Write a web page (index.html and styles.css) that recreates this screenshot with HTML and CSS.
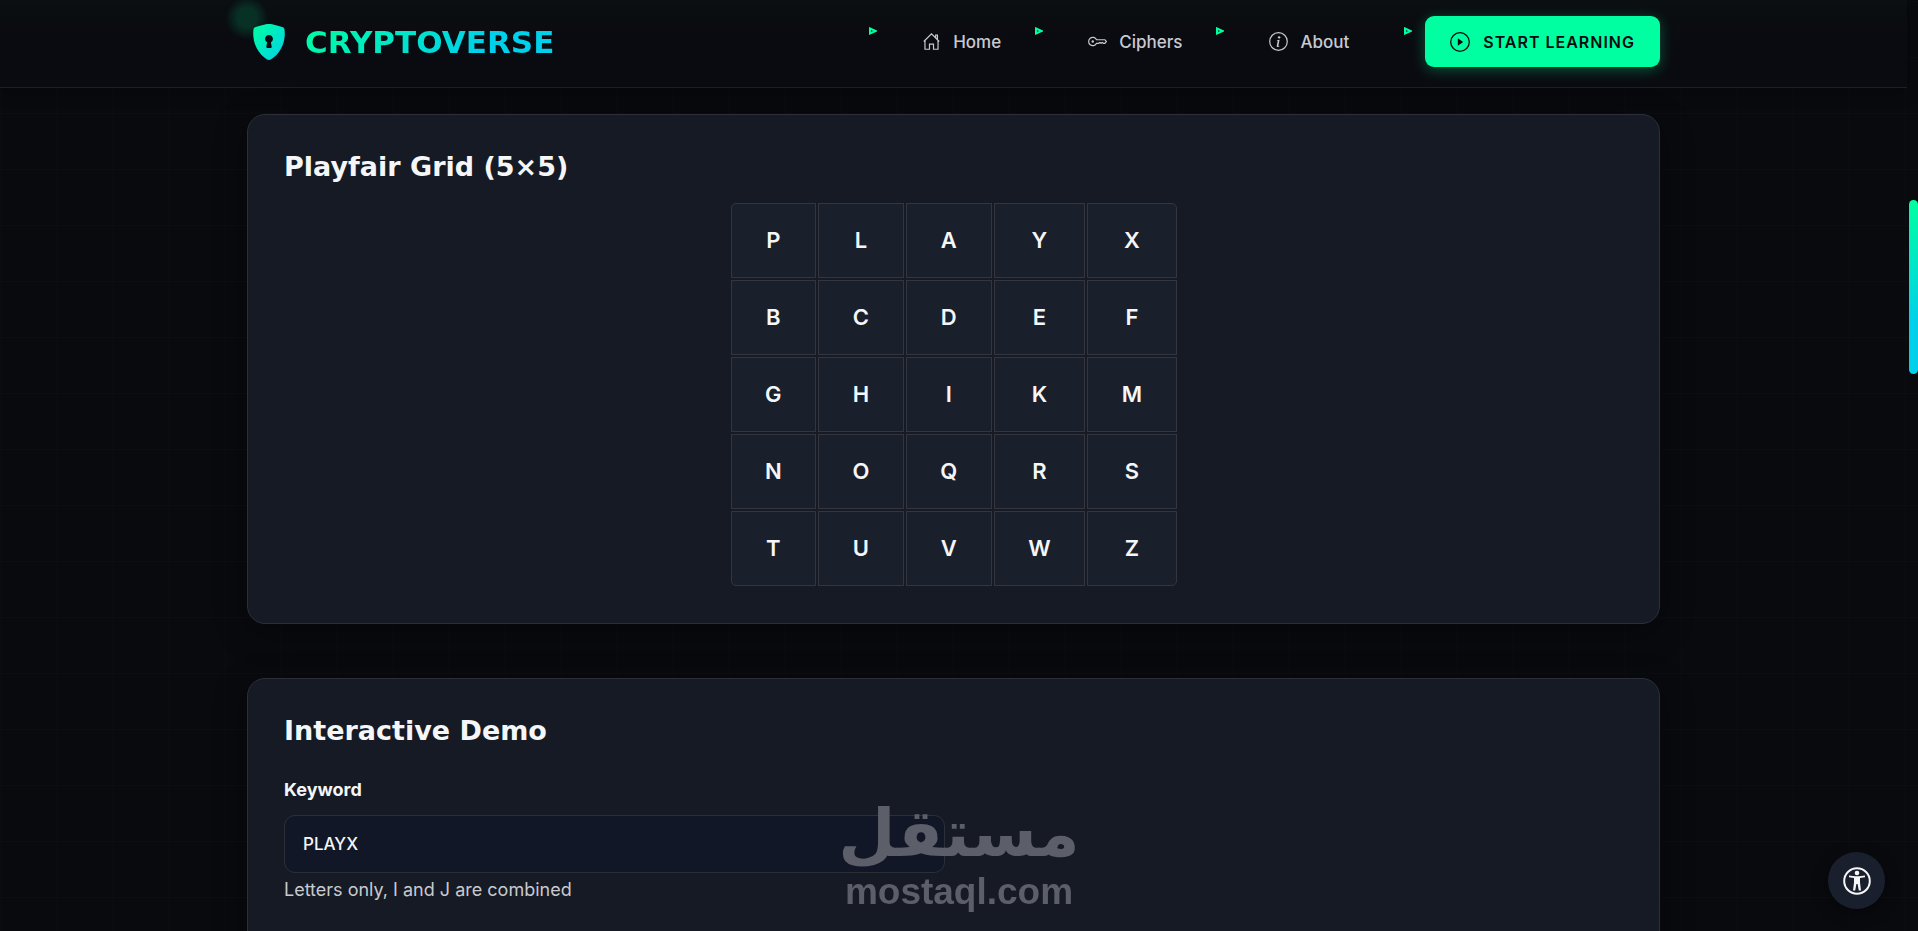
FILE: index.html
```html
<!DOCTYPE html>
<html lang="en">
<head>
    <meta charset="UTF-8">
    <meta name="viewport" content="width=device-width, initial-scale=1.0">
    <title>Playfair Cipher - CryptoVerse</title>
    <link rel="stylesheet" href="styles.css">
</head>
<body>
    <header class="header">
        <div class="container header-inner">
            <a href="#" class="logo">
                <svg class="logo-icon" viewBox="0 0 32 36" aria-hidden="true">
                    <defs>
                        <linearGradient id="shield" x1="0" y1="0" x2="1" y2="1">
                            <stop offset="0" stop-color="#00ffa0"/>
                            <stop offset="1" stop-color="#00d0ea"/>
                        </linearGradient>
                    </defs>
                    <path fill="url(#shield)" fill-rule="evenodd" d="M16 0C12.500 0 5.500 2 2.200 3.200C1.200 3.600 .6 4.300 .5 5.300C-.8 16 2.800 24 7.500 29.800C10.200 33 14 36 16 36C18 36 21.800 33 24.500 29.800C29.200 24 32.800 16 31.500 5.300C31.400 4.300 30.800 3.600 29.800 3.200C26.500 2 19.500 0 16 0ZM16 11A3.900 3.900 0 0 1 17.900 18.300L18.700 22.600Q18.800 24 17.600 24H14.400Q13.200 24 13.300 22.600L14.100 18.300A3.900 3.900 0 0 1 16 11Z"/>
                </svg>
                <span class="logo-text">CRYPTOVERSE</span>
            </a>
            <nav>
                <ul class="nav-list">
                    <li>
                        <svg class="marker" viewBox="0 0 8 8" aria-hidden="true"><path d="M1 1.500L6.500 4L1 6.500Z"/></svg>
                        <a href="#" class="nav-link">
                            <svg class="nav-icon" viewBox="0 0 16 16" aria-hidden="true"><path d="M2.500 7.400V14.500H6.300V10.200H9.700V14.500H13.500V7.400M1.500 8L8 1.500L14.500 8M11.500 4.800V2.500H13V6.300"/></svg>
                            Home
                        </a>
                    </li>
                    <li>
                        <svg class="marker" viewBox="0 0 8 8" aria-hidden="true"><path d="M1 1.500L6.500 4L1 6.500Z"/></svg>
                        <a href="#" class="nav-link">
                            <svg class="nav-icon" viewBox="0 0 16 16" aria-hidden="true"><path d="M7.200 6.500A3.500 3.500 0 1 0 7.200 9.500H9L10 8.800L11 9.500L12 8.800L13 9.500H14.200L15.500 8L14.200 6.500Z"/><circle class="solid" cx="4" cy="8" r="1"/></svg>
                            Ciphers
                        </a>
                    </li>
                    <li>
                        <svg class="marker" viewBox="0 0 8 8" aria-hidden="true"><path d="M1 1.500L6.500 4L1 6.500Z"/></svg>
                        <a href="#" class="nav-link">
                            <svg class="nav-icon" viewBox="0 0 16 16" aria-hidden="true"><circle cx="8" cy="8" r="7.400"/><path class="solid" d="M8.930 6.588L6.640 6.875L6.560 7.255L7.010 7.338C7.300 7.408 7.360 7.513 7.295 7.808L6.557 11.276C6.363 12.173 6.662 12.595 7.365 12.595C7.910 12.595 8.543 12.343 8.830 11.997L8.918 11.581C8.718 11.757 8.426 11.827 8.232 11.827C7.957 11.827 7.857 11.634 7.928 11.294Z"/><circle class="solid" cx="8.500" cy="4.500" r="1"/></svg>
                            About
                        </a>
                    </li>
                    <li class="nav-cta">
                        <svg class="marker" viewBox="0 0 8 8" aria-hidden="true"><path d="M1 1.500L6.500 4L1 6.500Z"/></svg>
                        <button type="button" class="btn-start">
                            <svg class="btn-icon" viewBox="0 0 20 20" aria-hidden="true"><circle cx="10" cy="10" r="9.300" fill="none" stroke="currentColor" stroke-width="1.300"/><path fill="currentColor" d="M7.800 6.200L13.200 10L7.800 13.800Z"/></svg>
                            START LEARNING
                        </button>
                    </li>
                </ul>
            </nav>
        </div>
    </header>

    <main class="container main">
        <section class="card">
            <h2>Playfair Grid (5×5)</h2>
            <table class="playfair-grid">
                <tbody>
                    <tr><td>P</td><td>L</td><td>A</td><td>Y</td><td>X</td></tr>
                    <tr><td>B</td><td>C</td><td>D</td><td>E</td><td>F</td></tr>
                    <tr><td>G</td><td>H</td><td>I</td><td>K</td><td>M</td></tr>
                    <tr><td>N</td><td>O</td><td>Q</td><td>R</td><td>S</td></tr>
                    <tr><td>T</td><td>U</td><td>V</td><td>W</td><td>Z</td></tr>
                </tbody>
            </table>
        </section>

        <section class="card card-demo">
            <h2>Interactive Demo</h2>
            <div class="form-group">
                <label for="keyword">Keyword</label>
                <input type="text" id="keyword" value="PLAYX">
                <small>Letters only, I and J are combined</small>
            </div>
        </section>
    </main>

    <div class="cursor-glow"></div>

    <div class="watermark">
        <span class="watermark-ar" lang="ar" dir="rtl">مستقل</span>
        <span class="watermark-en">mostaql.com</span>
    </div>

    <button type="button" class="accessibility-btn" aria-label="Accessibility">
        <svg viewBox="0 0 28 28" aria-hidden="true">
            <circle cx="14" cy="14" r="12.800" fill="none" stroke="currentColor" stroke-width="2"/>
            <circle cx="14" cy="6" r="2.300" fill="currentColor"/>
            <path fill="currentColor" d="M6 8.600L12 9.200H16L22 8.600V10.200L17 11V15.500L18 23.500H15.800L14.600 17H13.400L12.200 23.500H10L11 15.500V11L6 10.200Z"/>
        </svg>
    </button>

    <div class="scroll-thumb"></div>
</body>
</html>
```

FILE: styles.css
```css
* {
    box-sizing: border-box;
}
body {
    margin: 0;
    padding-right: 11px;
    height: 100vh;
    overflow: hidden;
    display: flex;
    flex-direction: column;
    font-family: Inter, "Liberation Sans", sans-serif;
    font-size: 18px;
    line-height: 26px;
    color: #f5f6f8;
    background-color: #090a0e;
    /* faint grid behind the page */
    background-image:
        linear-gradient(rgba(0, 255, 160, 0.02) 1px, transparent 1px),
        linear-gradient(90deg, rgba(0, 255, 160, 0.02) 1px, transparent 1px);
    background-size: 56px 56px;
    background-position: 1px 1px;
}
.container {
    width: 100%;
    max-width: 1461px;
    margin: 0 auto;
    padding: 0 24px;
}

/* Header */
.header {
    flex: none;
    background: linear-gradient(#0a0f11, #0a0b10 40px);
    border-bottom: 1px solid #1c1e29;
    box-shadow: 0 4px 16px rgba(0, 0, 0, 0.3);
}
.header-inner {
    display: flex;
    align-items: center;
    justify-content: space-between;
    padding-top: 16px;
    padding-bottom: 20px;
}
.logo {
    display: flex;
    align-items: center;
    gap: 20px;
    padding-left: 6px;
    text-decoration: none;
}
.logo-icon {
    width: 32px;
    height: 36px;
}
.logo-text {
    font-family: "DejaVu Sans", sans-serif;
    font-size: 31px;
    font-weight: bold;
    line-height: 36px;
    color: transparent;
    background: linear-gradient(135deg, #00ffa0, #00d0ea 70%);
    -webkit-background-clip: text;
    background-clip: text;
}
.nav-list {
    display: flex;
    align-items: center;
    gap: 23px;
    margin: 0;
    padding: 0;
    list-style: none;
}
.nav-list li {
    position: relative;
    padding: 0 32px;
}
.nav-list .nav-cta {
    margin-left: 21px;
    padding: 0;
}
.marker {
    position: absolute;
    left: -21px;
    top: -2px;
    width: 8px;
    height: 8px;
    fill: none;
    stroke: #00ffa0;
    stroke-width: 2;
}
.nav-cta .marker {
    top: 11px;
}
.nav-link {
    display: flex;
    align-items: center;
    gap: 12px;
    font-size: 17px;
    font-weight: 500;
    color: #c8cad0;
    text-decoration: none;
}
.nav-icon {
    width: 19px;
    height: 19px;
    fill: none;
    stroke: currentColor;
    stroke-width: 1;
}
.nav-icon .solid {
    fill: currentColor;
    stroke: none;
}
.btn-start {
    display: flex;
    align-items: center;
    gap: 13px;
    height: 51px;
    padding: 0 25px;
    border: none;
    border-radius: 9px;
    background: #00ffa0;
    color: #0a0b10;
    font: 600 16px/26px Inter, sans-serif;
    letter-spacing: 1px;
    box-shadow: 0 3px 14px rgba(0, 255, 160, 0.3);
    cursor: pointer;
}
.btn-icon {
    width: 20px;
    height: 20px;
}

/* Cards */
.main {
    flex: 1;
    min-height: 0;
    padding-top: 26px;
    display: flex;
    flex-direction: column;
    gap: 54px;
}
.card {
    flex: none;
    padding: 36px 36px 35px;
    border: 1px solid #2b2f38;
    border-radius: 18px;
    background: #161a24;
    box-shadow: 0 8px 32px rgba(0, 0, 0, 0.4);
}
.card-demo {
    min-height: 480px;
}
h2 {
    margin: 0 0 18px;
    font-family: "DejaVu Sans", sans-serif;
    font-size: 27px;
    font-weight: bold;
    line-height: 32px;
}
.playfair-grid {
    width: 450px;
    margin: 0 auto;
    border-collapse: separate;
    border-spacing: 2px;
}
.playfair-grid td {
    height: 75px;
    padding: 0 32px 2px;
    border: 1px solid #33363f;
    background: #1a1f2c;
    font-size: 22px;
    font-weight: 600;
    text-align: center;
}
.playfair-grid tr:first-child td:first-child {
    border-top-left-radius: 5px;
}
.playfair-grid tr:first-child td:last-child {
    border-top-right-radius: 5px;
}
.playfair-grid tr:last-child td:first-child {
    border-bottom-left-radius: 5px;
}
.playfair-grid tr:last-child td:last-child {
    border-bottom-right-radius: 5px;
}

/* Demo form */
.form-group {
    display: flex;
    flex-direction: column;
    margin-top: 30px;
    width: 661px;
    max-width: 100%;
}
.form-group label {
    margin-bottom: 12px;
    font-weight: 700;
}
.form-group input {
    height: 58px;
    margin-bottom: 4px;
    padding: 0 18px;
    border: 1px solid #2b2f38;
    border-radius: 11px;
    background: #111726;
    color: #f5f6f8;
    font: 500 17px/26px Inter, sans-serif;
}
.form-group small {
    font-size: 18px;
    color: #c8cad0;
}

/* Overlays */
.cursor-glow {
    position: fixed;
    left: 225px;
    top: -4px;
    width: 44px;
    height: 44px;
    border-radius: 50%;
    background: radial-gradient(circle, rgba(0, 255, 160, 0.15) 30%, transparent 70%);
    pointer-events: none;
}
.watermark {
    position: fixed;
    left: 50%;
    bottom: 19px;
    transform: translateX(-50%);
    display: flex;
    flex-direction: column;
    align-items: center;
    color: #5c5e69;
    font-weight: bold;
    pointer-events: none;
}
.watermark-ar {
    font-family: "DejaVu Sans", sans-serif;
    font-size: 66px;
    line-height: 76px;
}
.watermark-en {
    font-family: "Liberation Sans", sans-serif;
    font-size: 37px;
    line-height: 40px;
}
.accessibility-btn {
    position: fixed;
    right: 33px;
    bottom: 22px;
    display: flex;
    align-items: center;
    justify-content: center;
    width: 57px;
    height: 57px;
    padding: 0;
    border: none;
    border-radius: 50%;
    background: #1a1f2e;
    color: #f5f6f8;
    box-shadow: 0 4px 16px rgba(0, 0, 0, 0.4);
    cursor: pointer;
}
.accessibility-btn svg {
    width: 28px;
    height: 28px;
}
.scroll-thumb {
    position: fixed;
    right: 0;
    top: 200px;
    width: 9px;
    height: 174px;
    border-radius: 5px;
    background: linear-gradient(#00ffa0, #00d0ea 70%);
}
```
